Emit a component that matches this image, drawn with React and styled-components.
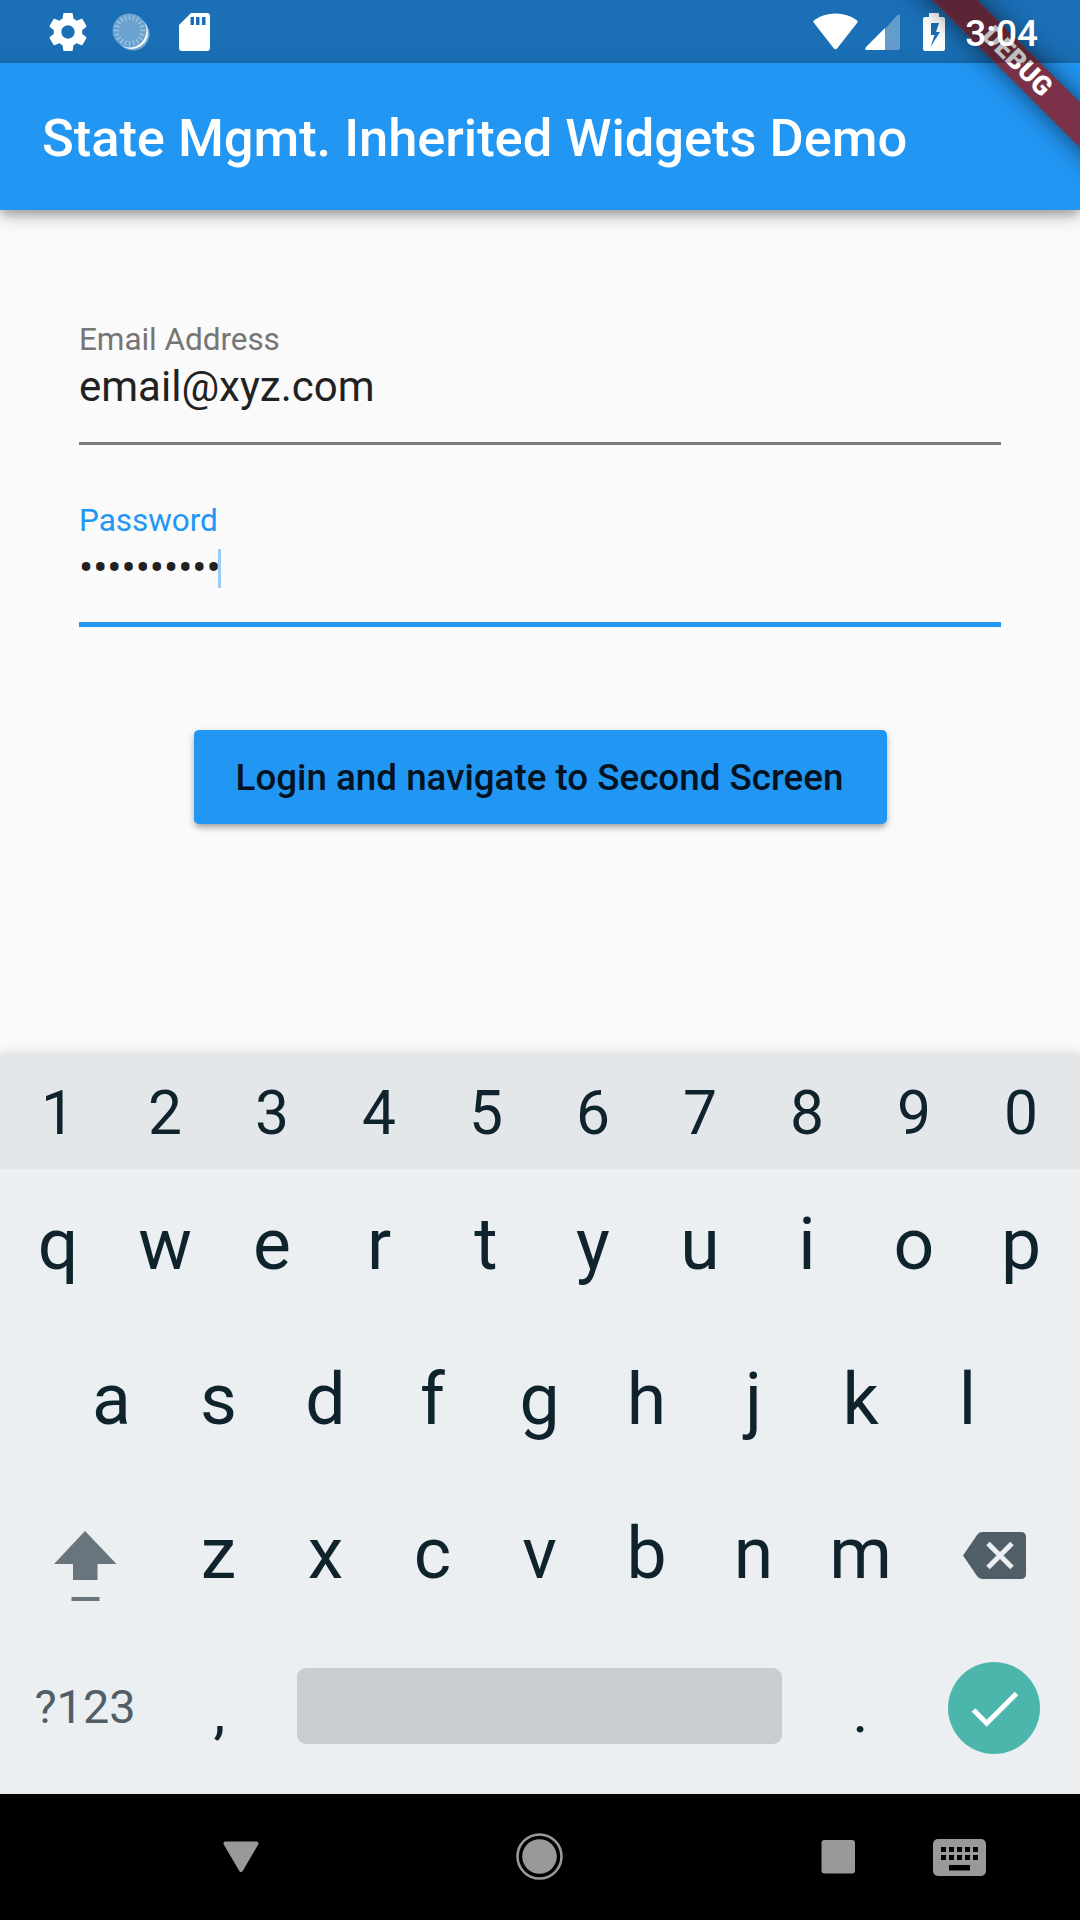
import React from "react";
import styled, { createGlobalStyle, css } from "styled-components";

const Global = createGlobalStyle`
  *, *::before, *::after { box-sizing: border-box; }
  html, body { margin: 0; padding: 0; background: #fafafa; }
  body { font-family: Roboto, "Noto Sans", sans-serif; }
`;

const Screen = styled.div`
  position: relative;
  width: 1080px;
  height: 1920px;
  display: flex;
  flex-direction: column;
  overflow: hidden;
  background: #fafafa;
`;

const StatusBar = styled.header`
  height: 63px;
  flex: none;
  display: flex;
  justify-content: space-between;
  background: #1a6fb6;
  padding: 0 42px 0 49px;
`;

const StatusGroup = styled.div`
  display: flex;
  align-items: center;
`;

const StatusIcon = styled.svg`
  display: block;
  flex: none;
  width: ${(p) => p.$w}px;
  height: ${(p) => p.$h}px;
  margin-left: ${(p) => p.$gap || 0}px;
`;

const Clock = styled.span`
  position: relative;
  z-index: 3;
  margin-left: 20px;
  font-size: 37px;
  font-weight: 500;
  line-height: 63px;
  padding-top: 3px;
  color: #fff;
`;

const AppBar = styled.div`
  position: relative;
  height: 147px;
  flex: none;
  display: flex;
  align-items: center;
  padding: 2px 42px 0;
  background: #2196f3;
  box-shadow: 0 5px 10px -2px rgba(0, 0, 0, 0.28), 0 10px 13px rgba(0, 0, 0, 0.1),
    0 2px 24px rgba(0, 0, 0, 0.1);
`;

const Title = styled.h1`
  margin: 0;
  font-size: 52.5px;
  font-weight: 500;
  line-height: 62px;
  letter-spacing: -0.05px;
  color: #fff;
  white-space: nowrap;
`;

const BannerClip = styled.div`
  position: absolute;
  z-index: 1;
  top: 0;
  right: 0;
  width: 240px;
  height: 210px;
  overflow: hidden;
  pointer-events: none;
`;

const Banner = styled.div`
  position: absolute;
  top: 46.5px;
  left: 28px;
  width: 300px;
  height: 31.5px;
  padding-right: 3px;
  transform: rotate(45deg);
  background: #7b3248;
  box-shadow: 0 0 26px rgba(0, 0, 0, 0.6);
  color: #fff;
  font-size: 26.8px;
  font-weight: 900;
  line-height: 31.5px;
  text-align: center;
`;

const StatusScrim = styled.div`
  position: absolute;
  z-index: 2;
  top: 0;
  right: 0;
  width: 200px;
  height: 63px;
  background: rgba(0, 0, 0, 0.25);
  clip-path: polygon(53px 0, 97px 0, 160px 63px, 116px 63px);
`;

const Form = styled.main`
  flex: 1;
  display: flex;
  flex-direction: column;
  align-items: center;
  padding: 108px 79px 0;
`;

const Field = styled.div`
  width: 922px;
  height: 181px;
  flex: none;
`;

const FieldBody = styled.div`
  height: ${(p) => (p.$active ? 128 : 127)}px;
  padding-top: 3px;
  border-bottom: ${(p) => (p.$active ? "5px solid #2196f3" : "3px solid #7c7c7c")};
`;

const Label = styled.div`
  font-size: 31.5px;
  line-height: 38px;
  letter-spacing: -0.05px;
  color: ${(p) => (p.$active ? "#2196f3" : "#757575")};
`;

const Value = styled.div`
  display: flex;
  align-items: center;
  height: 49px;
  margin-top: 3px;
  font-size: 42px;
  line-height: 49px;
  color: #212121;
`;

const Caret = styled.span`
  width: 3px;
  height: 39px;
  margin: 2px 0 0 -3px;
  background: #9bcdf8;
`;

const LoginButton = styled.button`
  width: 693px;
  height: 94px;
  flex: none;
  margin-top: 50px;
  padding: 1px 1px 0 0;
  border: 0;
  border-radius: 5px;
  background: #2196f3;
  box-shadow: 0 5px 6px -2px rgba(0, 0, 0, 0.2), 0 3px 6px rgba(0, 0, 0, 0.13),
    0 2px 10px rgba(0, 0, 0, 0.1);
  color: #04131f;
  font: 500 36.75px Roboto, sans-serif;
  white-space: nowrap;
`;

const Keyboard = styled.section`
  height: 741px;
  flex: none;
  background: #ebeff2;
  color: #0e232c;
  box-shadow: 0 -2px 10px rgba(0, 0, 0, 0.1);
`;

const KeyRow = styled.div`
  display: flex;
  justify-content: center;
  height: 154.5px;
  font-size: 71.5px;
  ${(p) =>
    p.$numbers &&
    css`
      height: 116px;
      font-size: 60.5px;
      background: #e3e7ea;
    `}
`;

const Key = styled.div`
  width: 107px;
  flex: none;
  display: flex;
  justify-content: center;
  align-items: center;
  padding: 0 1px 3px 0;
  line-height: 1;
`;

const NumberKey = styled(Key)`
  padding: 7px 1px 0 0;
`;

const PunctuationKey = styled(Key)`
  padding: 4px 0 0 1px;
  font-size: 60px;
`;

const WideKey = styled(Key)`
  width: 160px;
  padding: ${(p) => p.$drop || 0}px ${(p) => (p.$drop ? 1 : 0)}px 0 0;
`;

const SymbolKey = styled(Key)`
  width: 160px;
  padding-bottom: 5px;
  font-size: 46.8px;
  color: #505f67;
`;

const SpaceBar = styled.div`
  width: 485px;
  height: 76px;
  margin: 35.5px 24.5px 0;
  border-radius: 9px;
  background: #c9cdd0;
`;

const EnterKey = styled.div`
  width: 92px;
  height: 92px;
  margin: 29.5px 34.5px 0;
  border-radius: 50%;
  background: #4db6ac;
`;

const NavBar = styled.nav`
  height: 126px;
  flex: none;
  display: flex;
  align-items: center;
  gap: 257px;
  background: #000;
  padding-left: 223px;
`;

const NavGroup = styled.div`
  display: flex;
  align-items: center;
  gap: 78px;
`;

const letterRows = ["qwertyuiop", "asdfghjkl"];

function Settings() {
  return (
    <StatusIcon $w={38} $h={38} viewBox="2.2 2 19.6 20">
      <path
        fill="#fff"
        d="M19.43 12.98c.04-.32.07-.64.07-.98s-.03-.66-.07-.98l2.11-1.65c.19-.15.24-.42.12-.64l-2-3.46c-.12-.22-.39-.3-.61-.22l-2.49 1c-.52-.4-1.08-.73-1.69-.98l-.38-2.65C14.46 2.18 14.25 2 14 2h-4c-.25 0-.46.18-.49.42l-.38 2.65c-.61.25-1.17.59-1.69.98l-2.49-1c-.23-.09-.49 0-.61.22l-2 3.46c-.13.22-.07.49.12.64l2.11 1.65c-.04.32-.07.65-.07.98s.03.66.07.98l-2.11 1.65c-.19.15-.24.42-.12.64l2 3.46c.12.22.39.3.61.22l2.49-1c.52.4 1.08.73 1.69.98l.38 2.65c.03.24.24.42.49.42h4c.25 0 .46-.18.49-.42l.38-2.65c.61-.25 1.17-.59 1.69-.98l2.49 1c.23.09.49 0 .61-.22l2-3.46c.12-.22.07-.49-.12-.64l-2.11-1.65zM12 15.5c-1.93 0-3.5-1.57-3.5-3.5s1.57-3.5 3.5-3.5 3.5 1.57 3.5 3.5-1.57 3.5-3.5 3.5z"
      />
    </StatusIcon>
  );
}

function Spinner() {
  const ticks = Array.from({ length: 20 }, (_, i) => i * 18);
  return (
    <StatusIcon $w={38} $h={38} $gap={25} viewBox="0 0 38 38">
      <circle cx="21" cy="21" r="16.5" fill="#76a9d3" />
      <circle cx="19.5" cy="19.5" r="16.4" fill="#fff" />
      <circle cx="17.5" cy="17.5" r="17" fill="#6ba2d0" />
      {ticks.map((a) => (
        <path key={a} d="M17.5 1.8v5" stroke="#a6c7e3" strokeWidth="1.2" transform={`rotate(${a} 17.5 17.5)`} />
      ))}
    </StatusIcon>
  );
}

function SdCard() {
  return (
    <StatusIcon $w={31} $h={38} $gap={29} viewBox="0 0 31 38">
      <path
        fill="#fff"
        fillRule="evenodd"
        d="M12 0H28Q31 0 31 3V35Q31 38 28 38H3Q0 38 0 35V12ZM11.5 4v8h3.500V4zM17 4v8h3.500V4zM23 4v8h3.500V4z"
      />
    </StatusIcon>
  );
}

function DebugBanner() {
  return (
    <>
      <BannerClip>
        <Banner>DEBUG</Banner>
      </BannerClip>
      <StatusScrim />
    </>
  );
}

function KeyboardIcon() {
  return (
    <svg width="53" height="37" viewBox="0 0 53 37">
      <rect width="53" height="37" rx="5" fill="#999" />
      {[8, 16, 24, 32, 40].map((x) => (
        <path key={x} d={`M${x} 8h5v5h-5zM${x} 16h5v5h-5z`} fill="#000" />
      ))}
      <path d="M16 26h21v5.500h-21z" fill="#000" />
    </svg>
  );
}

export default function App() {
  return (
    <Screen>
      <Global />
      <StatusBar>
        <StatusGroup>
          <Settings />
          <Spinner />
          <SdCard />
        </StatusGroup>
        <StatusGroup>
          <StatusIcon $w={45} $h={38} viewBox="0 0 45 38">
            <path fill="#fff" d="M1 10Q-.5 8.500 1.500 7Q10 .5 22.500 .5T43.500 7Q45.500 8.500 44 10L24.500 35Q22.500 37.500 20.500 35Z" />
          </StatusIcon>
          <StatusIcon $w={35} $h={36} $gap={7} viewBox="0 0 35 36">
            <path fill="#649ccc" d="M20 15L32 1.500Q35-1 35 2.500V34Q35 36 33 36H20Z" />
            <path fill="#fff" d="M20 14V36H2Q-1 36 1 33Z" />
          </StatusIcon>
          <StatusIcon $w={22} $h={38} $gap={23} viewBox="0 0 22 38">
            <path fill="#fff" fillRule="evenodd" d="M6 0H16V4H20Q22 4 22 6V36Q22 38 20 38H2Q0 38 0 36V6Q0 4 2 4H6ZM8 10V22H11.500L7.500 34L17 19H13L16 10Z" />
          </StatusIcon>
          <Clock>3:04</Clock>
        </StatusGroup>
      </StatusBar>
      <AppBar>
        <Title>State Mgmt. Inherited Widgets Demo</Title>
      </AppBar>
      <DebugBanner />
      <Form>
        <Field>
          <FieldBody>
            <Label>Email Address</Label>
            <Value>email@xyz.com</Value>
          </FieldBody>
        </Field>
        <Field>
          <FieldBody $active>
            <Label $active>Password</Label>
            <Value>
              ••••••••••
              <Caret />
            </Value>
          </FieldBody>
        </Field>
        <LoginButton>Login and navigate to Second Screen</LoginButton>
      </Form>
      <Keyboard>
        <KeyRow $numbers>
          {[..."1234567890"].map((c) => (
            <NumberKey key={c}>{c}</NumberKey>
          ))}
        </KeyRow>
        {letterRows.map((row) => (
          <KeyRow key={row}>
            {[...row].map((c) => (
              <Key key={c}>{c}</Key>
            ))}
          </KeyRow>
        ))}
        <KeyRow>
          <WideKey $drop={22}>
            <svg width="65" height="70" viewBox="0 0 65 70">
              <path fill="#68757d" d="M32 0L63.500 33H44.500V49H20V33H1ZM18.500 66H46.500V70H18.500Z" />
            </svg>
          </WideKey>
          {[..."zxcvbnm"].map((c) => (
            <Key key={c}>{c}</Key>
          ))}
          <WideKey>
            <svg width="63" height="47" viewBox="0 0 63 47">
              <path fill="#505f67" d="M0 23.500L14 3Q16 0 19 0H58Q63 0 63 5V42Q63 47 58 47H19Q16 47 14 44Z" />
              <path stroke="#ebeff2" strokeWidth="5" d="M25 11.500L49 35.500M49 11.500L25 35.500" />
            </svg>
          </WideKey>
        </KeyRow>
        <KeyRow>
          <SymbolKey>?123</SymbolKey>
          <PunctuationKey>,</PunctuationKey>
          <SpaceBar />
          <PunctuationKey>.</PunctuationKey>
          <EnterKey>
            <svg width="92" height="92" viewBox="0 0 92 92">
              <path fill="none" stroke="#fff" strokeWidth="5" d="M25.500 48L38.700 61.200L68.500 31.500" />
            </svg>
          </EnterKey>
        </KeyRow>
      </Keyboard>
      <NavBar>
        <svg width="36" height="32" viewBox="0 0 36 32">
          <path fill="#999" stroke="#999" strokeWidth="4" strokeLinejoin="round" d="M2.500 2.500H33.500L18 29Z" />
        </svg>
        <svg width="48" height="48" viewBox="0 0 48 48">
          <circle cx="23.500" cy="23.500" r="17.300" fill="#999" />
          <circle cx="23.500" cy="23.500" r="22" fill="none" stroke="#999" strokeWidth="2.600" />
        </svg>
        <NavGroup>
          <svg width="34" height="34" viewBox="0 0 34 34">
            <rect width="33.500" height="33.500" x=".5" rx="3" fill="#999" />
          </svg>
          <KeyboardIcon />
        </NavGroup>
      </NavBar>
    </Screen>
  );
}
